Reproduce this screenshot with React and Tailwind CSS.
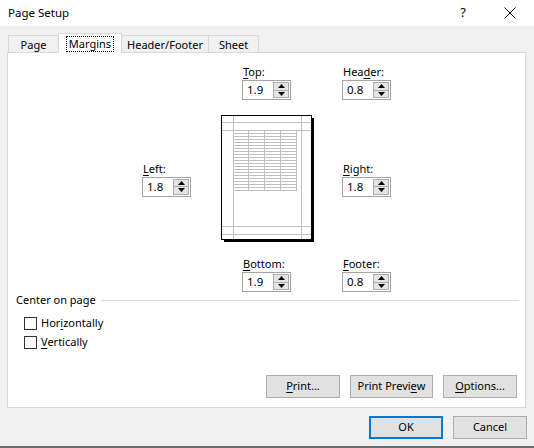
import React from 'react';

const font = { fontFamily: '"Noto Sans", "Liberation Sans", sans-serif' };

// underline one letter (mnemonic)
function Mn({ text, at }) {
    return (
        <>
            {text.slice(0, at)}
            <span className="underline underline-offset-2">{text[at]}</span>
            {text.slice(at + 1)}
        </>
    );
}

function Spin({ value }) {
    return (
        <div className="w-[49px] h-[20px] border border-[#a5a5a5] bg-white flex items-center">
            <span className="flex-1 pl-[4px] text-[11.5px] leading-none text-black">{value}</span>
            <div className="w-[16px] h-[16px] mr-[1px] flex flex-col border border-[#adadad] bg-[#e5e5e5]">
                <div className="flex-1 flex items-center justify-center border-b border-[#adadad]">
                    <svg width="7" height="4" viewBox="0 0 7 4"><path d="M0 4 L3.5 0 L7 4 Z" fill="#000" /></svg>
                </div>
                <div className="flex-1 flex items-center justify-center">
                    <svg width="7" height="4" viewBox="0 0 7 4"><path d="M0 0 L3.5 4 L7 0 Z" fill="#000" /></svg>
                </div>
            </div>
        </div>
    );
}

function Field({ label, at, value }) {
    return (
        <div className="flex flex-col w-[100px]">
            <div className="h-[16px] text-[11px] leading-[16px] pl-[1px] text-black"><Mn text={label} at={at} /></div>
            <Spin value={value} />
        </div>
    );
}

function Preview() {
    const rows = Array.from({ length: 21 }, (_, i) => 15 + i * 3);
    return (
        <svg width="94" height="128" viewBox="0 0 94 128" className="block">
            <rect x="91" y="3" width="2" height="124" fill="#000" />
            <rect x="3" y="125" width="90" height="2" fill="#000" />
            <rect x="0.5" y="0.5" width="90" height="124" fill="#fff" stroke="#000" />
            <g stroke="#c0c0c0" strokeWidth="1">
                <line x1="12.5" y1="1" x2="12.5" y2="124" />
                <line x1="80.5" y1="1" x2="80.5" y2="124" />
                <line x1="1" y1="7.5" x2="90" y2="7.5" />
                <line x1="1" y1="15.5" x2="90" y2="15.5" />
                <line x1="1" y1="111.5" x2="90" y2="111.5" />
                <line x1="1" y1="119.5" x2="90" y2="119.5" />
                {rows.map((y) => (
                    <line key={y} x1="12" y1={y + 0.5} x2="76" y2={y + 0.5} />
                ))}
                {[27.5, 43.5, 59.5, 75.5].map((x) => (
                    <line key={x} x1={x} y1="15" x2={x} y2="76" />
                ))}
            </g>
        </svg>
    );
}

function Btn({ children, def, w = 74 }) {
    return (
        <button
            className={
                'h-[23px] text-[11px] text-black bg-[#e1e1e1] flex items-center justify-center ' +
                (def ? 'border-2 border-[#0078d7]' : 'border border-[#adadad]')
            }
            style={{ width: w }}
        >
            {children}
        </button>
    );
}

function Check({ children }) {
    return (
        <div className="flex items-center h-[19px]">
            <div className="w-[13px] h-[13px] border border-[#333] bg-white" />
            <span className="ml-[4px] text-[11px] text-black">{children}</span>
        </div>
    );
}

export default function App() {
    const tabs = ['Page', 'Margins', 'Header/Footer', 'Sheet'];
    return (
        <div className="w-[534px] h-[448px] bg-[#f0f0f0] flex flex-col overflow-hidden" style={font}>
            {/* title bar */}
            <div className="h-[26px] bg-white flex items-center shrink-0">
                <span className="ml-[8px] text-[11.5px] text-black">Page Setup</span>
                <span className="ml-auto mr-[38px] text-[13px] text-black">?</span>
                <svg width="12" height="12" viewBox="0 0 12 12" className="mr-[18px]">
                    <path d="M0.5 0.5 L11.5 11.5 M11.5 0.5 L0.5 11.5" stroke="#000" strokeWidth="1" />
                </svg>
            </div>

            {/* tab strip */}
            <div className="h-[26px] flex items-end pl-[8px] shrink-0 relative z-10">
                {tabs.map((t) => {
                    const sel = t === 'Margins';
                    const w = { Page: 51, Margins: 64, 'Header/Footer': 88, Sheet: 51 }[t];
                    return sel ? (
                        <div
                            key={t}
                            className="h-[20px] -mb-px -mr-px bg-white border border-b-0 border-[#d9d9d9] flex items-center justify-center text-[11px] text-black"
                            style={{ width: w }}
                        >
                            <span className="outline outline-1 outline-dotted outline-black px-[2px] leading-[14px]">{t}</span>
                        </div>
                    ) : (
                        <div
                            key={t}
                            className="h-[17px] -mr-px border border-b-0 border-[#d9d9d9] flex items-center justify-center pt-[2px] text-[11px] text-black"
                            style={{ width: w }}
                        >
                            {t}
                        </div>
                    );
                })}
            </div>

            {/* panel */}
            <div className="ml-[7px] mr-[8px] h-[356px] bg-white border border-[#d9d9d9] flex flex-col shrink-0">
                <div className="flex mt-[11px] ml-[234px]">
                    <Field label="Top:" at={0} value="1.9" />
                    <Field label="Header:" at={3} value="0.8" />
                </div>

                <div className="flex items-center mt-[15px] ml-[134px] h-[127px]">
                    <div className="w-[79px]">
                        <Field label="Left:" at={0} value="1.8" />
                    </div>
                    <Preview />
                    <div className="ml-[27px]">
                        <Field label="Right:" at={0} value="1.8" />
                    </div>
                </div>

                <div className="flex mt-[14px] ml-[234px]">
                    <Field label="Bottom:" at={0} value="1.9" />
                    <Field label="Footer:" at={0} value="0.8" />
                </div>

                <div className="flex items-center mt-[0px] ml-[8px] mr-[6px] h-[16px]">
                    <span className="text-[11px] text-black">Center on page</span>
                    <div className="flex-1 ml-[5px] h-px bg-[#dcdcdc]" />
                </div>
                <div className="ml-[16px] mt-[6px] flex flex-col">
                    <Check><Mn text="Horizontally" at={3} /></Check>
                    <Check><Mn text="Vertically" at={0} /></Check>
                </div>

                <div className="mt-auto mb-[9px] mr-[8px] flex justify-end gap-[10px]">
                    <Btn><Mn text="Print..." at={0} /></Btn>
                    <Btn w={83}><Mn text="Print Preview" at={11} /></Btn>
                    <Btn><Mn text="Options..." at={0} /></Btn>
                </div>
            </div>

            {/* footer buttons */}
            <div className="mt-[8px] mr-[7px] flex justify-end gap-[10px]">
                <Btn def>OK</Btn>
                <Btn>Cancel</Btn>
            </div>

            <div className="mt-auto h-[2px] bg-[#6b6b6b]" />
        </div>
    );
}
